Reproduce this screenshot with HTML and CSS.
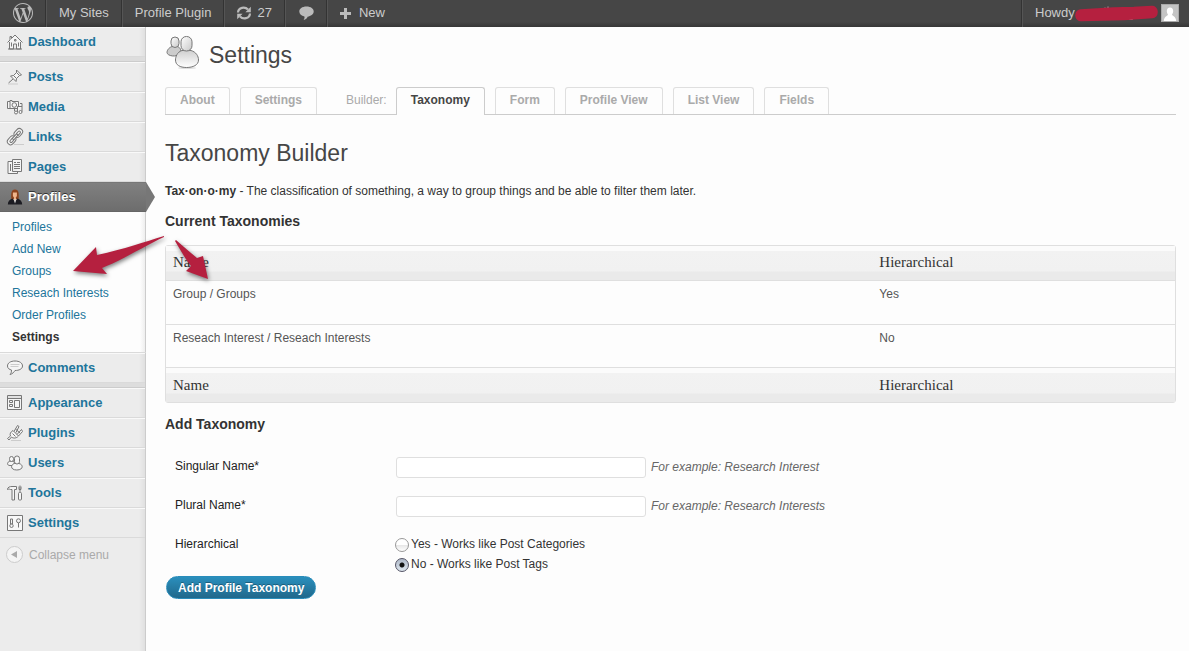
FILE: index.html
```html
<!DOCTYPE html>
<html lang="en">
<head>
<meta charset="utf-8">
<title>Settings – Profile Plugin</title>
<link rel="stylesheet" href="styles.css">
</head>
<body>
<header class="bar">
  <a class="bar-item bar-logo" href="#" aria-label="WordPress"><svg width="20" height="20" viewBox="0 0 24 24" fill="#bbb"><path d="M21.469 6.825c.84 1.537 1.318 3.3 1.318 5.175 0 3.979-2.156 7.456-5.363 9.325l3.295-9.527c.615-1.54.82-2.771.82-3.864 0-.405-.026-.78-.07-1.11m-7.981.105c.647-.03 1.232-.105 1.232-.105.582-.075.514-.93-.067-.899 0 0-1.755.135-2.88.135-1.064 0-2.85-.15-2.85-.15-.585-.03-.661.855-.075.885 0 0 .54.061 1.125.09l1.68 4.605-2.37 7.08L5.354 6.9c.649-.03 1.234-.1 1.234-.1.585-.075.516-.93-.065-.896 0 0-1.746.138-2.874.138-.2 0-.438-.008-.69-.015C4.911 3.15 8.235 1.215 12 1.215c2.809 0 5.365 1.072 7.286 2.833-.046-.003-.091-.009-.141-.009-1.06 0-1.812.923-1.812 1.914 0 .89.513 1.643 1.06 2.531.411.72.89 1.643.89 2.977 0 .915-.354 1.994-.821 3.479l-1.075 3.585-3.9-11.61.001.014zM12 22.784c-1.059 0-2.081-.153-3.048-.437l3.237-9.406 3.315 9.087c.024.053.05.101.078.149-1.12.393-2.325.609-3.582.609M1.211 12c0-1.564.336-3.05.935-4.39L7.29 21.709C3.694 19.96 1.212 16.271 1.211 12M12 0C5.385 0 0 5.385 0 12s5.385 12 12 12 12-5.385 12-12S18.615 0 12 0"/></svg></a>
  <a class="bar-item" href="#">My Sites</a>
  <a class="bar-item" href="#">Profile Plugin</a>
  <a class="bar-item bar-update" href="#"><svg width="16" height="14" viewBox="0 0 16 14"><g fill="none" stroke="#bbb" stroke-width="2.200"><path d="M2 6.500C2.400 1.200 9 .4 12 3.600"/><path d="M14 7.500C13.600 12.800 7 13.600 4 10.400"/></g><path fill="#bbb" d="M14.800.8V6.200H9.400ZM1.200 13.200V7.800H6.600Z"/></svg>27</a>
  <a class="bar-item bar-bubble" href="#" aria-label="Comments"><svg width="15" height="14" viewBox="0 0 15 14"><path fill="#bbb" d="M7.500.5C11.900.5 14.700 2.700 14.700 5.600S11.600 10.400 8.600 10.700C8 12.400 6.800 13.500 4.600 13.900C5.500 12.700 5.700 11.500 5.400 10.500C2.500 9.900.3 8.300.3 5.600C.3 2.700 3.100.5 7.500.5Z"/></svg></a>
  <a class="bar-item bar-new" href="#"><svg width="11" height="11" viewBox="0 0 11 11"><path d="M4 0h3v4h4v3H7v4H4V7H0V4h4Z" fill="#bbb"/></svg>New</a>
  <a class="bar-item bar-user" href="#">Howdy
    <svg class="avatar" width="18" height="18" viewBox="0 0 18 18"><path fill="#aaa" d="M0 0h18v18H0z"/><path fill="#c4c4c4" d="M1 1h16v16H1z"/><path fill="#fff" d="M9 3.500C11 3.500 12.300 5 12.200 7.200C12.100 8.800 11.500 9.900 11 10.500C11.200 12 15 12.200 15.200 17H2.800C3 12.200 6.800 12 7 10.500C6.500 9.900 5.900 8.800 5.800 7.200C5.700 5 7 3.500 9 3.500Z"/></svg>
    <svg class="scribble" width="86" height="17" viewBox="0 0 86 17"><path d="M31 2.500v2M34 1.500v2M50 12l2 3M54.500 14.500h4l1-2" stroke="#aaa" fill="none"/><path d="M7 10L40 8L60 7.500L78 6.500V7.500L50 9.500L7 10.500Z" fill="#b5203f" stroke="#b5203f" stroke-width="11.500" stroke-linejoin="round"/></svg>
  </a>
</header>

<div class="page">
<nav class="side">
  <a class="item" href="#"><svg class="ico" viewBox="0 0 16 16"><path d="M.5 8.500L3 6V2.500h1.500V4.500L8 1L15.500 8.500M2.500 8V15h4V10h3v5h4V8M7.500 5.500h1.500v1.500h-1.500zM4.500 8.500v4M11.500 8.500v4M1 15h14"/></svg>Dashboard</a>
  <div class="gap"></div>
  <a class="item" href="#"><svg class="ico" viewBox="0 0 16 16"><path d="M9.500 1L14.500 6L12.500 6.500L9.500 9.500L9 12.500L3.500 7L6.500 6.500L9.500 3.500ZM6 10L1.500 14M9.500 3.500l3 3M6.500 6.500l3 3"/><path class="pale" d="M1 15h10"/></svg>Posts</a>
  <a class="item" href="#"><svg class="ico" viewBox="0 0 16 16"><path d="M.5 2.500H3V1.500H5V2.500H11.500V9.500H.5ZM3 2.500v7"/><circle cx="7.300" cy="6" r="2.300"/><path d="M13 4.500h2v8M10.500 13V7.500h4.500M7.500 12V10"/><circle cx="13.500" cy="13" r="1.500"/><circle cx="9" cy="13.500" r="1.500"/></svg>Media</a>
  <a class="item" href="#"><svg class="ico" viewBox="0 0 16 16"><g transform="rotate(-48 8 8)"><rect x="-1.500" y="4.500" width="9.500" height="6.500" rx="3.200"/><rect x="1" y="6.800" width="5" height="2.400" rx="1.200"/><rect x="8.500" y="4.500" width="9.500" height="6.500" rx="3.200"/><rect x="10.500" y="6.800" width="5" height="2.400" rx="1.200"/><path d="M5 7h6.500v2H5z"/></g><path class="pale" d="M7 15.500h10"/></svg>Links</a>
  <a class="item" href="#"><svg class="ico" viewBox="0 0 16 16"><path d="M5.500.5h9v12h-9zM5.500 2.500h-4.500v12h9.500v-2M7 3.500h2M10 3.500h3M7 5.500h6M7 7.500h6M7 9.500h6M3.500 5v7"/></svg>Pages</a>
  <a class="item current" href="#"><svg class="ico" viewBox="0 0 16 16"><g stroke="none"><path fill="#8d431d" d="M4.300 10.500C4.100 5 3.800.5 8 .5s3.900 4.500 3.700 10Z"/><path fill="#f0b58c" d="M5.900 3.500h4v3.500l-1.300 2L10 11H6l1.200-2L5.900 7Z"/><path fill="#1c1c22" d="M.8 15.500C.8 12 3 10 6 9.500L8 13l2-3.500c3 .5 5.200 2.500 5.200 6Z"/><path fill="#ddd" d="M6.500 10L8 14.500L9.500 10Z"/><path fill="#f0b58c" d="M7 9h2l-1 3Z"/></g></svg>Profiles</a>
  <div class="sub">
    <a href="#">Profiles</a>
    <a href="#">Add New</a>
    <a href="#">Groups</a>
    <a href="#">Reseach Interests</a>
    <a href="#">Order Profiles</a>
    <a class="on" href="#">Settings</a>
  </div>
  <a class="item" href="#"><svg class="ico" viewBox="0 0 16 16"><path d="M8 1C12.500 1 15.500 3 15.500 6S12 10.500 8 10.500C7 12 5.500 14 3 14.500C4.500 13 4.500 11.500 4.500 10C2.500 9.500.5 8.500.5 6C.5 3 3.500 1 8 1Z"/><path class="pale" d="M3.500 4.500h9M3.500 6.500h8"/></svg>Comments</a>
  <div class="gap"></div>
  <a class="item" href="#"><svg class="ico" viewBox="0 0 16 16"><path d="M.5.500h14v14H.5zM.5 3.500h14M7.500 5.500h5v7h-5zM2.500 5.500h3v2h-3zM2.500 9.500h3v2h-3z"/><path class="pale" d="M1 2h13"/></svg>Appearance</a>
  <a class="item" href="#"><svg class="ico" viewBox="0 0 16 16"><path d="M6 5.500L11.500 11C9.500 13.500 6 13.500 4.500 12L2 15L.5 13.500L3.500 11C2.500 9 3.500 7 6 5.500ZM7 6.500L10.500.5L12 1.500L9 7.500M10 9.500L14.500 4.500L15.500 6.500L11.500 11M5.500 8.500L8.500 11.500M8.500 4L13 8"/><path class="pale" d="M4 15.500h10"/></svg>Plugins</a>
  <a class="item" href="#"><svg class="ico" viewBox="0 0 16 16"><path d="M3 6C0 7-.5 10.500 3 10.500L6 10.500L7.500 8L6.500 6Z"/><rect x="2.500" y="1.500" width="4" height="5" rx="2"/><path d="M7.500 8.500C3.500 9.500 3 15 9.800 15S16.500 9.500 12 8.500Z"/><rect x="7.500" y="1" width="5" height="8" rx="2.400"/></svg>Users</a>
  <a class="item" href="#"><svg class="ico" viewBox="0 0 16 16"><path d="M.5 4.500C.5 2 3 1.500 5 1.500H9.500V4.500H7.500V15H5V4.500H3.500C2.500 4 2 4 .5 4.500ZM13 .5v7M12 1.500v3h2v-3"/><rect x="11.500" y="7.500" width="3" height="7.500" rx="1"/></svg>Tools</a>
  <a class="item" href="#"><svg class="ico" viewBox="0 0 16 16"><path d="M.5.500h15v15H.5z" fill="#f8f8f8"/><path d="M3.500 4h2v5h-2zM11.500 8v4.500M4.500 9v1"/><circle cx="4.500" cy="10.800" r="1.700"/><circle cx="11.500" cy="5.800" r="2"/></svg>Settings</a>
  <button class="collapse" type="button"><svg width="17" height="17" viewBox="0 0 17 17"><circle cx="8.500" cy="8.500" r="8" fill="#f4f4f4" stroke="#ccc"/><path d="M5 8.500L11 5v7Z" fill="#aaa"/></svg>Collapse menu</button>
</nav>

<main class="main">
  <div class="title">
    <svg width="36" height="36" viewBox="0 0 36 36" stroke="#777" fill="url(#g)"><defs><linearGradient id="g" x1="0" y1="0" x2="1" y2="1"><stop offset="0" stop-color="#fff"/><stop offset="1" stop-color="#c8c8c8"/></linearGradient><linearGradient id="h" x1="0" y1="0" x2="0" y2="1"><stop offset="0" stop-color="#d0d0d0"/><stop offset="1" stop-color="#fff"/></linearGradient></defs><ellipse cx="22" cy="34" rx="9" ry="1" fill="#ddd" stroke="none"/><path d="M7 12.500C3 14 2 17 2 18.500C2 22 12 24 15 19C17 16 15 13.500 12.500 12.500Z" fill="#ccc"/><rect x="6" y="3" width="8" height="10.500" rx="4"/><path d="M17 16.500C12 18 10.500 23 10.500 26C10.500 31 15 33.500 21.500 33.500S33.500 31 33.500 26C33.500 22 31 18 26 16.500Z" fill="url(#h)"/><rect x="16" y="2.500" width="11" height="14.500" rx="5.300"/></svg>
    <h1>Settings</h1>
  </div>
  <nav class="tabs">
    <a class="tab" href="#">About</a>
    <a class="tab" href="#">Settings</a>
    <span class="tabs-label">Builder:</span>
    <a class="tab active" href="#">Taxonomy</a>
    <a class="tab" href="#">Form</a>
    <a class="tab" href="#">Profile View</a>
    <a class="tab" href="#">List View</a>
    <a class="tab" href="#">Fields</a>
  </nav>

  <h2>Taxonomy Builder</h2>
  <p class="intro"><strong>Tax·on·o·my</strong> - The classification of something, a way to group things and be able to filter them later.</p>
  <h3>Current Taxonomies</h3>
  <table class="list">
    <thead><tr><th>Name</th><th class="kind">Hierarchical</th></tr></thead>
    <tbody>
      <tr><td>Group / Groups</td><td>Yes</td></tr>
      <tr><td>Reseach Interest / Reseach Interests</td><td>No</td></tr>
    </tbody>
    <tfoot><tr><th>Name</th><th>Hierarchical</th></tr></tfoot>
  </table>

  <h3>Add Taxonomy</h3>
  <form class="form">
    <div class="row">
      <label for="singular">Singular Name*</label>
      <div class="field"><input class="text" id="singular" type="text"><em>For example: Research Interest</em></div>
    </div>
    <div class="row">
      <label for="plural">Plural Name*</label>
      <div class="field"><input class="text" id="plural" type="text"><em>For example: Research Interests</em></div>
    </div>
    <div class="row last" role="radiogroup" aria-labelledby="kind">
      <span id="kind">Hierarchical</span>
      <div class="choices">
        <label><input type="radio" name="kind"><span>Yes - Works like Post Categories</span></label>
        <label><input type="radio" name="kind" checked><span>No - Works like Post Tags</span></label>
      </div>
    </div>
    <button class="submit" type="button">Add Profile Taxonomy</button>
  </form>
</main>
</div>

<svg class="arrows" width="150" height="60" viewBox="0 0 150 60" fill="#b5203f"><path d="M94 6C74 12 55 19 27 25L26 17L3 41L37 44L32 38C50 31 75 16 94 7Z"/><path d="M106 10C114 17 120 22 127 28L133 26L138 49L116 41L121 36C116 30 111 21 105 11Z"/></svg>
</body>
</html>
```
FILE: styles.css
```css
* { box-sizing: border-box; }

body {
  margin: 0;
  min-height: 100vh;
  display: flex;
  flex-direction: column;
  position: relative;
  background: #fdfdfd;
  color: #333;
  font: 12px/16px "Liberation Sans", Arial, sans-serif;
}

a { text-decoration: none; }
h1, h2, h3, p { margin: 0; }
svg { flex: none; }

/* Top bar */
.bar {
  display: flex;
  height: 27px;
  background: linear-gradient(#464646 22px, #373737);
  font-size: 13px;
}
.bar-item {
  display: flex;
  align-items: center;
  gap: 6px;
  padding: 0 12px 1px;
  color: #ccc;
  border-left: 1px solid #555;
  border-right: 1px solid #333;
}
.bar-logo { border-left: 0; padding-left: 13px; }
.bar-update { padding-left: 11px; gap: 5px; }
.bar-bubble { padding-left: 13px; }
.bar-new { border-right: 0; gap: 8px; }
.bar-user {
  position: relative;
  margin-left: auto;
  padding: 0 10px 2px 12px;
  width: 167px;
  justify-content: space-between;
  box-shadow: -1px 0 #333;
  border-right: 0;
}
.scribble { position: absolute; left: 51px; top: 5px; }

.page { display: flex; flex: 1; }

/* Side menu */
.side {
  flex: none;
  width: 146px;
  background: linear-gradient(to right, #ececec 139px, #e0e0e0 145px, #ccc 145px);
}
.item {
  display: flex;
  align-items: center;
  gap: 5px;
  height: 30px;
  margin-right: 1px;
  padding-left: 7px;
  border-top: 1px solid #f9f9f9;
  border-bottom: 1px solid #dadada;
  color: #21759b;
  font-size: 13px;
  font-weight: bold;
}
.ico { width: 16px; height: 16px; fill: #f5f5f5; stroke: #777; overflow: visible; }
.ico .pale { stroke: #ccc; }
.gap { height: 5px; margin-right: 1px; background: #ddd; border-bottom: 1px solid #ccc; }
.current {
  position: relative;
  margin-right: 0;
  background: linear-gradient(#808080, #6d6d6d);
  border-color: #777 transparent #666;
  color: #fff;
  text-shadow: 0 -1px #333;
}
.current::after {
  content: "";
  position: absolute;
  left: 100%;
  top: -1px;
  bottom: -1px;
  width: 9px;
  background: #777;
  clip-path: polygon(0 0, 100% 50%, 0 100%);
}
.sub {
  display: flex;
  flex-direction: column;
  padding: 4px 0 4px 12px;
  background: linear-gradient(to right, #fdfdfd 140px, #eee 145px, #ccc 145px);
  border-bottom: 1px solid #dadada;
}
.sub a { color: #21759b; line-height: 22px; }
.sub .on { color: #333; font-weight: bold; }
.collapse {
  display: flex;
  align-items: center;
  gap: 6px;
  padding: 8px 6px;
  border: 0;
  background: none;
  color: #aaa;
  font: inherit;
}

/* Content */
.main { flex: 1; padding: 7px 13px 20px 19px; }
.title { display: flex; align-items: flex-start; gap: 8px; height: 43px; }
.title h1 { padding-top: 3px; }
h1, h2 { color: #464646; font-size: 23px; font-weight: normal; line-height: 36px; }
h3 { font-size: 14px; line-height: 20px; }

.tabs {
  display: flex;
  gap: 10px;
  margin: 10px 0 20px;
  border-bottom: 1px solid #ccc;
}
.tab {
  height: 27px;
  padding: 0 14px;
  border: 1px solid #dfdfdf;
  border-bottom: 0;
  border-radius: 3px 3px 0 0;
  color: #aaa;
  font-weight: bold;
  line-height: 24px;
}
.active {
  height: 28px;
  margin-bottom: -1px;
  border-color: #ccc;
  background: #fdfdfd;
  color: #464646;
}
.tabs-label { margin-right: -1px; padding-left: 19px; color: #aaa; line-height: 26px; }

.intro { margin: 12px 0; }

.list {
  width: 100%;
  margin: 14px 0 11px;
  border: 1px solid #dfdfdf;
  border-radius: 3px;
  border-spacing: 0;
  color: #555;
}
.list th, .list td { padding: 0 7px; text-align: left; }
.list th {
  height: 34px;
  padding-bottom: 2px;
  background: linear-gradient(#fbfbfb 5px, #f2f2f2 5px, #f1f1f1 25px, #eaeaea 26px);
  color: #333;
  font: 15px/20px "Liberation Serif", Georgia, serif;
}
.list .kind { width: 30%; }
.list td { height: 43px; padding-top: 5px; vertical-align: top; border-top: 1px solid #dfdfdf; }
.list tbody tr:first-child td { height: 44px; }
.list tfoot th { border-top: 1px solid #dfdfdf; height: 35px; padding-bottom: 0; }

.form { padding-top: 23px; color: #222; }
.row {
  display: grid;
  grid-template-columns: 221px 1fr;
  padding: 0 0 18px 10px;
}
.row > :first-child { line-height: 18px; }
.last { padding-bottom: 1px; }
.field { display: flex; gap: 5px; height: 21px; }
.text {
  width: 250px;
  height: 21px;
  border: 1px solid #dfdfdf;
  border-radius: 3px;
  background: #fff;
}
.field em { color: #666; line-height: 20px; }
.choices { margin-left: -1px; }
.choices label { display: flex; align-items: center; gap: 2px; height: 20px; color: #333; }
.choices span { padding-bottom: 2px; }
.choices input {
  appearance: none;
  width: 14px;
  height: 14px;
  margin: 0;
  border: 1px solid #999;
  border-radius: 50%;
  background: linear-gradient(#fff 50%, #e6e6e6 50%, #fff);
}
.choices input:checked {
  border-color: #556;
  background: radial-gradient(circle, #111 2px, transparent 3px), linear-gradient(#aeb8c8, #dde6ee);
}
.submit {
  display: block;
  height: 23px;
  margin: 0 1px;
  padding: 0 11px;
  border: 1px solid #298cba;
  border-radius: 12px;
  background: linear-gradient(#2a8fbd, #21688b);
  color: #fff;
  font: bold 12px/16px "Liberation Sans", Arial, sans-serif;
  text-shadow: 0 -1px rgba(0, 0, 0, .3);
}

/* Pointer arrows drawn over the page */
.arrows {
  position: absolute;
  left: 70px;
  top: 230px;
  pointer-events: none;
  filter: drop-shadow(1px 2px 2px rgba(0, 0, 0, .5));
}
```
